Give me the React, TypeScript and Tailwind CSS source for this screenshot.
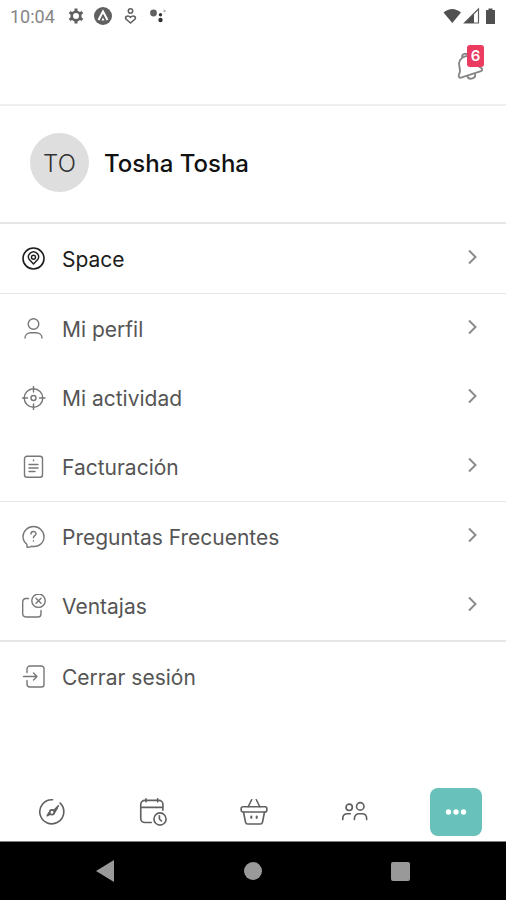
import { ReactNode, useState } from "react";

type MenuItem = {
  label: string;
  icon: ReactNode;
  arrow?: boolean;
  dark?: boolean;
};

type IconProps = {
  children: ReactNode;
  size?: string;
};

// 24x24 line icon, 1px = 1 unit
const LineIcon = ({ children, size = "size-6" }: IconProps) => (
  <svg
    viewBox="0 0 24 24"
    fill="none"
    stroke="currentColor"
    strokeWidth="1.4"
    strokeLinecap="round"
    strokeLinejoin="round"
    className={`${size} shrink-0`}
    aria-hidden="true"
  >
    {children}
  </svg>
);

const sections: { border: string; items: MenuItem[] }[] = [
  {
    border: "border-b",
    items: [
      {
        label: "Space",
        arrow: true,
        dark: true,
        icon: (
          <LineIcon>
            <circle cx="11.5" cy="11.500" r="10.5" strokeWidth="1.6" />
            <path d="M11.5 17 7.300 12.600a5 5 0 1 1 8.400 0Z" />
            <circle cx="11.5" cy="10.200" r="2" />
          </LineIcon>
        ),
      },
    ],
  },
  {
    border: "border-b",
    items: [
      {
        label: "Mi perfil",
        arrow: true,
        icon: (
          <LineIcon>
            <circle cx="11.500" cy="7" r="5.3" />
            <path d="M3 21c0-3.3 2.6-5.2 5.8-5.2h5.4c3.2 0 5.8 1.9 5.8 5.2" />
          </LineIcon>
        ),
      },
      {
        label: "Mi actividad",
        arrow: true,
        icon: (
          <LineIcon>
            <circle cx="11.500" cy="12" r="9.3" />
            <circle cx="11.500" cy="12" r="2.5" />
            <path d="M11.500 .5V6M11.500 18v5.5M.5 12H5.500M17.500 12h5.5" />
          </LineIcon>
        ),
      },
      {
        label: "Facturación",
        arrow: true,
        icon: (
          <LineIcon>
            <rect x="2.500" y="1.2" width="18" height="21" rx="2.5" />
            <path d="M11.500 5v.8M7 9.5h9M7 13h9M7 16.5h6" />
          </LineIcon>
        ),
      },
    ],
  },
  {
    border: "border-b-2",
    items: [
      {
        label: "Preguntas Frecuentes",
        arrow: true,
        icon: (
          <LineIcon>
            <path d="M5 22.300c2 0 3.400-.4 4.500-1 7 1.400 12.500-3.300 12.500-9.600A10.500 10.300 0 0 0 11.500 1.500 10.500 10.300 0 0 0 1 11.700c0 3 1.400 5.400 3.500 7.200.6 1 .7 2.200.5 3.400Z" />
            <path d="M9 9c0-3.300 5-3.200 5-.3 0 1.900-2.600 2-2.600 4.100M11.400 15.700v.2" />
          </LineIcon>
        ),
      },
      {
        label: "Ventajas",
        arrow: true,
        icon: (
          <LineIcon>
            <path d="M6.500 4.500H4A3.500 3.500 0 0 0 .7 8v11.500A3.500 3.500 0 0 0 4 23h12a3 3 0 0 0 3-3v-3.500" />
            <circle cx="16.500" cy="6.700" r="6.700" />
            <path d="m14 4.200 5 5M19 4.200l-5 5" />
          </LineIcon>
        ),
      },
    ],
  },
  {
    border: "border-b-0",
    items: [
      {
        label: "Cerrar sesión",
        icon: (
          <LineIcon>
            <path d="M5 7.500V4A3 3 0 0 1 8 1h11.500A2.500 2.500 0 0 1 22 3.500v16a2.500 2.500 0 0 1-2.500 2.500H8a3 3 0 0 1-3-3V15.500" />
            <path d="M1.500 11.500H15M11.500 8 15 11.500 11.500 15" />
          </LineIcon>
        ),
      },
    ],
  },
];

const tabs: { name: string; icon: ReactNode }[] = [
  {
    name: "Explorar",
    icon: (
      <LineIcon size="size-7">
        <path d="M12.500 1.500A10.300 10.300 0 1 0 19 4.400" />
        <circle cx="12" cy="12.200" r="2" />
        <path d="M13.500 10.700 17.500 6.700M10.500 13.700 8 15.200l1.300-2.500M13.800 13l2.700-4.300" />
      </LineIcon>
    ),
  },
  {
    name: "Reservas",
    icon: (
      <LineIcon size="size-7">
        <path d="M10.500 21H5A3.500 3.500 0 0 1 1.500 17.500V5.500A3.500 3.500 0 0 1 5 2h12a3.500 3.500 0 0 1 3.500 3.500V10.500M1.500 8h19M6 .8v2.500M16 .8v2.500" />
        <circle cx="18" cy="18" r="5.200" />
        <path d="M17.500 15.300V18l1.800 1.700" />
      </LineIcon>
    ),
  },
  {
    name: "Tienda",
    icon: (
      <LineIcon size="size-7">
        <rect x="1" y="7.500" width="22" height="4.500" rx="1.500" />
        <path d="m3 12 1.700 8.700a2 2 0 0 0 2 1.600h10.600a2 2 0 0 0 2-1.600L21 12M7 7.500 10 1.500M17 7.500 14 1.500" />
        <path d="M9.700 16v1M14.300 16v1" strokeWidth="1.800" />
      </LineIcon>
    ),
  },
  {
    name: "Comunidad",
    icon: (
      <LineIcon size="size-7">
        <circle cx="7" cy="8" r="2.700" />
        <circle cx="16.500" cy="7.200" r="3.200" />
        <path d="M1.500 18.500v-.8c0-2.600 1.700-4.200 4-4.200H8M11.500 18.500v-.8c0-2.800 1.700-4.200 4-4.200h2.500c2.300 0 4 1.600 4 4.200v.8" />
      </LineIcon>
    ),
  },
  {
    name: "Más",
    icon: (
      <svg viewBox="0 0 24 8" fill="currentColor" className="h-2 w-6" aria-hidden="true">
        <circle cx="4.500" cy="4" r="2.700" />
        <circle cx="12" cy="4" r="2.700" />
        <circle cx="19.500" cy="4" r="2.700" />
      </svg>
    ),
  },
];

function StatusBar() {
  return (
    <div className="flex h-8 items-center justify-between pr-2 pl-[10px] text-[#606060]">
      <div className="flex items-center">
        <span className="w-[57px] font-[Roboto,sans-serif] text-[18px] text-[#858585]">10:04</span>
        <svg viewBox="0 0 100 20" className="h-5 w-[100px]" aria-hidden="true">
          {/* settings */}
          <circle cx="9" cy="10" r="4.300" fill="none" stroke="currentColor" strokeWidth="2.600" />
          <path
            d="M9 2.500v3M9 14.500v3M2.500 6.200l2.600 1.600M12.900 12.200l2.600 1.600M2.500 13.800l2.600-1.600M12.900 7.800l2.600-1.600"
            stroke="currentColor"
            strokeWidth="3"
          />
          {/* app badge */}
          <circle cx="36" cy="10" r="9" fill="currentColor" />
          <path d="m31.500 14 4.500-8.500 4.500 8.500" fill="none" stroke="white" strokeWidth="2" />
          <path d="m34.500 14.500 1.500-3 1.500 3" fill="white" />
          {/* charging heart */}
          <circle cx="63.500" cy="5" r="2.200" fill="none" stroke="currentColor" strokeWidth="1.500" />
          <path
            d="m63.500 17-4.800-4.200c-.8-2.500 2.500-4 4.800-1.500 2.300-2.500 5.600-1 4.800 1.500Z"
            fill="none"
            stroke="currentColor"
            strokeWidth="1.500"
          />
          {/* assistant */}
          <circle cx="86.500" cy="7" r="3.400" fill="currentColor" />
          <circle cx="93.500" cy="8.700" r="1.700" fill="#333333" />
          <circle cx="93.500" cy="14" r="2.200" fill="#333333" />
          <circle cx="97.500" cy="5" r="1.200" fill="currentColor" opacity="0.500" />
        </svg>
      </div>
      <svg viewBox="0 0 56 20" className="h-5 w-14" fill="#505050" aria-hidden="true">
        <path d="M1.500 6.500c5.500-4.700 12-4.700 17.500 0L10.300 17Z" />
        <path d="M36.500 3v14h-14Z" fill="none" stroke="currentColor" strokeWidth="1.200" />
        <path d="M32 7.500V17h-9.500Z" />
        <path d="M46.500 2.500h4V4H53v14h-9V4h2.500Z" />
      </svg>
    </div>
  );
}

function MenuRow({ item }: { item: MenuItem }) {
  return (
    <button
      type="button"
      className={`flex h-[69px] w-full items-center pr-6 pl-[22px] text-left ${
        item.dark ? "text-[#1c1c1c]" : "text-[#555555]"
      }`}
    >
      <span className={item.dark ? "" : "text-[#777777]"}>{item.icon}</span>
      <span className="ml-4 flex-1 pt-0.5 text-[21px]">{item.label}</span>
      {item.arrow && (
        <svg
          viewBox="0 0 20 20"
          fill="none"
          stroke="#8c8c8c"
          strokeWidth="2"
          className="mb-1 size-5"
          aria-hidden="true"
        >
          <path d="m7 3.500 6.500 6.500L7 16.500" />
        </svg>
      )}
    </button>
  );
}

export default function App() {
  const [activeTab, setActiveTab] = useState("Más");

  return (
    <div className="flex min-h-screen flex-col bg-white font-[Inter,sans-serif]">
      <StatusBar />

      <header className="flex h-[74px] justify-end border-b-2 border-[#efefef] pt-3 pr-[22px]">
        <button type="button" aria-label="Notificaciones" className="relative h-10 w-7">
          <svg viewBox="0 0 28 40" fill="none" stroke="#858585" strokeWidth="1.800" aria-hidden="true">
            <g transform="translate(14.500 29) rotate(-18)">
              <path d="M-10.500 1.500c-1.700 0-2.200-1.800-1.300-3 2.600-2.700 3.300-4.500 3.300-8.500 0-4.500 3.800-7.500 8.500-7.500s8.500 3 8.500 7.500c0 4 .7 5.800 3.300 8.500.9 1.200.4 3-1.300 3Z" />
              <path d="M-3 -17a3 3 0 0 1 6 0M-4 2c0 5 8 5 8 0" />
            </g>
          </svg>
          <span className="absolute top-px right-0 flex h-[22px] w-[17px] items-center justify-center rounded-[3px] bg-[#ec3b60] text-[15px] font-semibold text-white">
            6
          </span>
        </button>
      </header>

      <section className="flex h-[118px] items-center gap-[15px] border-b-2 border-[#e6e6e6] pb-[3px] pl-[30px]">
        <div className="flex size-[59px] items-center justify-center rounded-full bg-[#dedede] pt-[3px] text-[24px] font-light text-[#333333]">
          TO
        </div>
        <h1 className="pt-[3px] text-[24px] font-medium text-[#111111]">Tosha Tosha</h1>
      </section>

      <main className="flex-1">
        {sections.map((section) => (
          <div key={section.items[0].label} className={`${section.border} border-[#e6e6e6]`}>
            {section.items.map((item) => (
              <MenuRow key={item.label} item={item} />
            ))}
          </div>
        ))}
      </main>

      <nav className="grid h-[60px] grid-cols-5 items-center border-b border-[#808080] pl-0.5">
        {tabs.map((tab) => (
          <button
            key={tab.name}
            type="button"
            aria-label={tab.name}
            onClick={() => setActiveTab(tab.name)}
            className={`mx-auto flex h-12 w-[52px] items-center justify-center rounded-lg ${
              activeTab === tab.name ? "bg-[#68c1ba] text-white" : "text-[#606060]"
            }`}
          >
            {tab.icon}
          </button>
        ))}
      </nav>

      <div className="flex h-[58px] items-center justify-around bg-black px-8 text-[#999999]">
        <button type="button" aria-label="Atrás">
          <svg viewBox="0 0 20 22" fill="currentColor" className="h-[22px] w-5">
            <path d="M18 0v22L0 11Z" />
          </svg>
        </button>
        <button type="button" aria-label="Inicio" className="size-[18px] rounded-full bg-current" />
        <button type="button" aria-label="Recientes" className="size-[19px] rounded-[2px] bg-current" />
      </div>
    </div>
  );
}
